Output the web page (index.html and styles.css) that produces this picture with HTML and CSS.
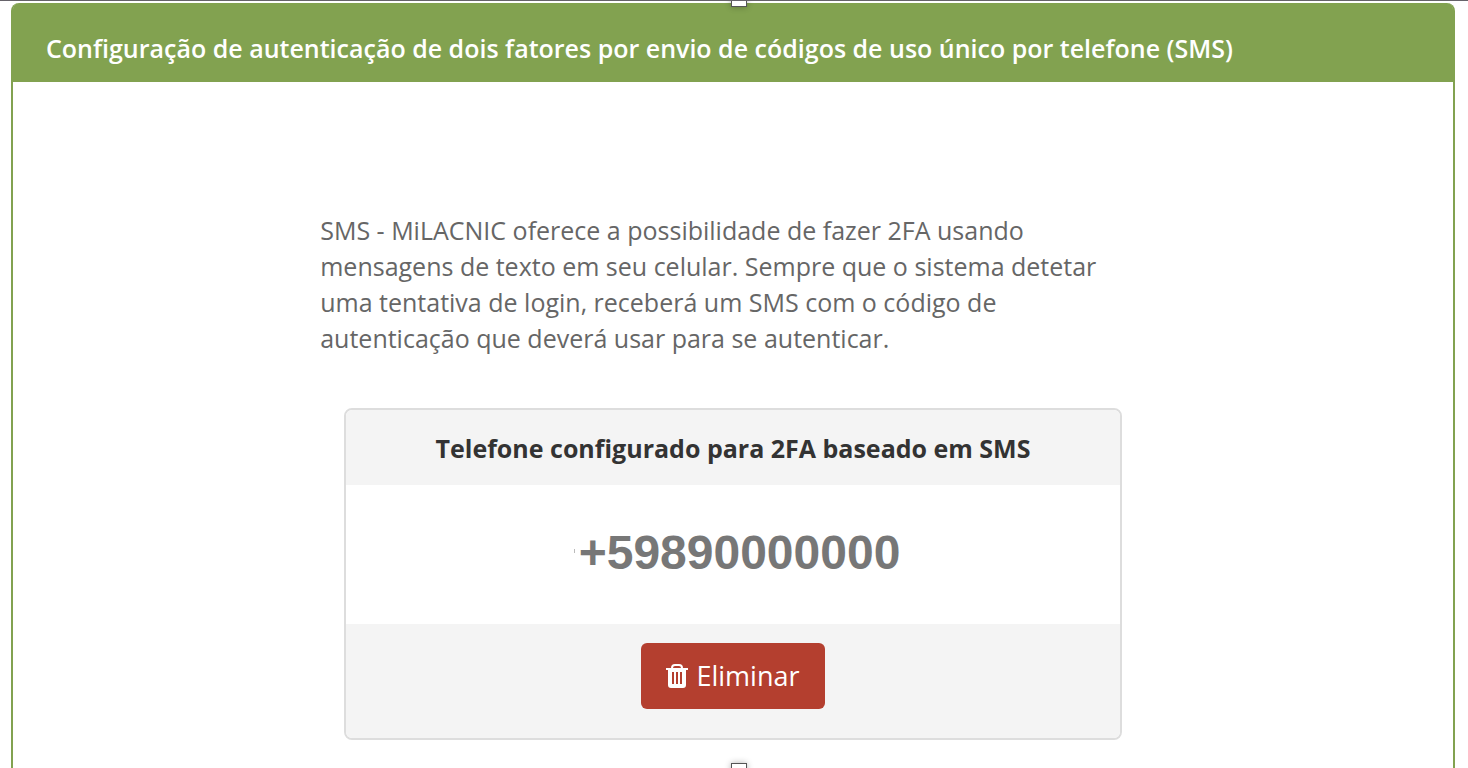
FILE: index.html
```html
<!DOCTYPE html>
<html lang="pt">
<head>
    <meta charset="UTF-8">
    <meta name="viewport" content="width=device-width, initial-scale=1.0">
    <title>MiLACNIC - 2FA SMS</title>
    <link rel="stylesheet" href="styles.css">
</head>
<body>
    <span class="handle handle-top"></span>

    <main class="panel">
        <h1 class="panel-heading">Configuração de autenticação de dois fatores por envio de códigos de uso único por telefone (SMS)</h1>

        <div class="panel-body">
            <p class="intro">SMS - MiLACNIC oferece a possibilidade de fazer 2FA usando mensagens de texto em seu celular. Sempre que o sistema detetar uma tentativa de login, receberá um SMS com o código de autenticação que deverá usar para se autenticar.</p>

            <!-- Configured phone -->
            <section class="card">
                <h2 class="card-header">Telefone configurado para 2FA baseado em SMS</h2>
                <div class="card-body">+59890000000</div>
                <div class="card-footer">
                    <button type="button" class="btn-danger">
                        <svg class="icon" viewBox="0 0 22 24" aria-hidden="true">
                            <path fill="none" stroke="#fff" stroke-width="2" d="M6 5V4Q6 1 9 1H13Q16 1 16 4V5"/>
                            <path fill="#fff" fill-rule="evenodd" d="M0 4H22V6H20V21Q20 24 17 24H5Q2 24 2 21V6H0ZM6 8V20H8V8ZM10 8V20H12V8ZM14 8V20H16V8Z"/>
                        </svg>
                        Eliminar
                    </button>
                </div>
            </section>
        </div>
    </main>

    <span class="handle handle-bottom"></span>
</body>
</html>
```

FILE: styles.css
```css
* {
    box-sizing: border-box;
}

body {
    font-family: 'Open Sans', sans-serif;
    display: flex;
    flex-direction: column;
    position: relative;
    min-height: 100vh;
    margin: 0;
    padding: 2px 13px 0 11px;
    border-top: 1px solid #66636a;
    background-color: #fff;
    color: #666;
    overflow: hidden;
}

/* Panel */
.panel {
    flex: 1;
    border: 2px solid #82a250;
    border-width: 0 2px;
    border-radius: 8px 8px 0 0;
}

.panel-heading {
    margin: 0;
    padding: 27px 33px 16px;
    border-radius: 6px 6px 0 0;
    background-color: #82a250;
    color: #fff;
    font-size: 25px;
    font-weight: 600;
    line-height: 36px;
}

.panel-body {
    display: flex;
    flex-direction: column;
    align-items: center;
    padding: 130px 0 28px;
}

/* a bit wider than the card on both sides */
.intro {
    width: calc(54% + 48px);
    margin: 0;
    font-size: 25px;
    line-height: 36px;
}

/* Phone card */
.card {
    width: 54%;
    margin-top: 52px;
    border: 2px solid #ddd;
    border-radius: 8px;
    overflow: hidden;
    text-align: center;
}

.card-header {
    margin: 0;
    padding: 20px 20px 19px;
    background-color: #f4f4f4;
    color: #333;
    font-size: 25px;
    font-weight: bold;
    line-height: 36px;
}

.card-body {
    display: flex;
    align-items: center;
    justify-content: center;
    gap: 4px;
    padding: 37px 0 40px 8px;
    color: #777;
    font-family: 'Liberation Sans', sans-serif;
    font-size: 48px;
    font-weight: bold;
    line-height: 62px;
}

.card-body::before {
    content: '';
    width: 1px;
    height: 4px;
    margin-bottom: 4px;
    background-color: #bbb;
}

.card-footer {
    display: flex;
    justify-content: center;
    padding: 19px 0 29px;
    background-color: #f4f4f4;
}

.btn-danger {
    display: flex;
    align-items: center;
    gap: 8px;
    padding: 15px 25px;
    border: none;
    border-radius: 6px;
    background-color: #b43f2f;
    color: #fff;
    font-family: inherit;
    font-size: 27px;
    line-height: 36px;
    cursor: pointer;
}

.btn-danger:hover {
    background-color: #9c3426;
}

.icon {
    width: 22px;
    height: 24px;
}

/* Selection handles */
.handle {
    position: absolute;
    left: 50%;
    width: 16px;
    height: 16px;
    margin-left: -3px;
    border: 1px solid #555;
    background-color: #fff;
    box-shadow: 0 0 6px rgba(0, 0, 0, 0.3);
}

.handle-top {
    top: -10px;
}

.handle-bottom {
    bottom: -11px;
}
```
